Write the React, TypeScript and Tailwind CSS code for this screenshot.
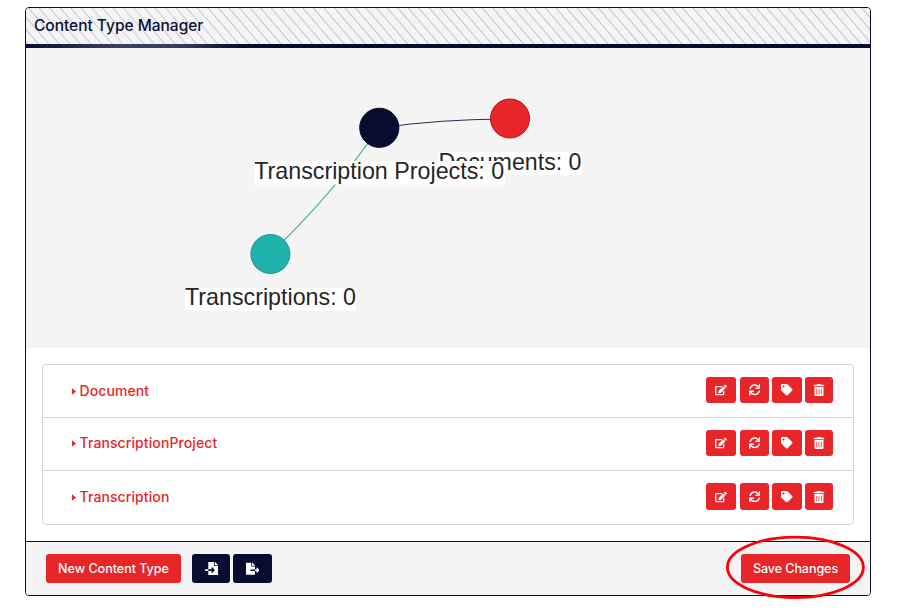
import { FaEdit, FaSync, FaTag, FaTrashAlt, FaFileImport, FaFileExport } from "react-icons/fa";

const rows = [
  { name: "Document", btn: "h-[26px]", label: "mt-[3px]" },
  { name: "TranscriptionProject", btn: "h-[26px]", label: "mt-[2px]" },
  { name: "Transcription", btn: "h-[27px]", label: "mt-[3px]" },
];

const iconBtn = "flex items-center justify-center rounded-[3px] bg-[#e8262a] text-white";

function Graph() {
  return (
    <svg width="844" height="300" viewBox="26 48 844 300" className="block bg-[#f4f4f4]" fontFamily="'Liberation Sans', Arial, sans-serif" fontSize="23.4" fill="#262626">
      <path d="M379 128Q440 119 510 119" fill="none" stroke="#2b2c52" />
      <path d="M379 128Q331 196 270 254" fill="none" stroke="#3ba9a2" strokeWidth="1.2" />
      <circle cx="510" cy="118.5" r="19.5" fill="#e8262a" stroke="#b80f18" />
      <circle cx="379.3" cy="127.8" r="19.6" fill="#080c2e" stroke="#080c2e" />
      <circle cx="270.4" cy="254" r="19.5" fill="#20b2ad" stroke="#1a918d" />
      <rect x="438" y="152" width="144" height="23" fill="#fff" />
      <text x="438.5" y="170" textLength="143" lengthAdjust="spacingAndGlyphs">Documents: 0</text>
      <rect x="254" y="161" width="251" height="23.5" fill="#fff" />
      <text x="254.2" y="179" textLength="250" lengthAdjust="spacingAndGlyphs">Transcription Projects: 0</text>
      <rect x="185" y="288" width="171" height="22.5" fill="#fff" />
      <text x="185" y="305" textLength="171" lengthAdjust="spacingAndGlyphs">Transcriptions: 0</text>
    </svg>
  );
}

export default function App() {
  return (
    <div className="relative h-[612px] w-[898px] overflow-hidden bg-white pt-[7px] pl-[25px] font-['Inter',sans-serif]">
      <div className="flex h-[589px] w-[846px] flex-col overflow-hidden rounded-[4px] border border-[#080c33] bg-white">
        <div className="relative h-9 shrink-0 bg-[#f4f4f4]">
          <svg width="844" height="36" className="absolute inset-0">
            <defs>
              <pattern id="hatch" width="10.55" height="36" patternUnits="userSpaceOnUse" patternTransform="skewX(40.6)">
                <path d="M2.5 0V36" stroke="#bdbdca" strokeWidth="1.15" />
              </pattern>
              <linearGradient id="fade">
                <stop offset="0" stopColor="#f4f4f4" stopOpacity="0" />
                <stop offset="0.12" stopColor="#f4f4f4" stopOpacity="0.3" />
                <stop offset="0.24" stopColor="#f4f4f4" stopOpacity="0" />
              </linearGradient>
            </defs>
            <rect width="844" height="36" fill="url(#hatch)" />
            <rect width="844" height="36" fill="url(#fade)" />
          </svg>
          <h1 className="relative pt-[6px] pl-2 text-[15.5px] leading-[24px] font-medium tracking-[-0.02px] whitespace-nowrap text-[#0b1038]">Content Type Manager</h1>
        </div>
        <div className="h-1 shrink-0 bg-[linear-gradient(90deg,#080c33_0,#3b3e64_90px,#3b3e64_150px,#080c33_215px)]" />
        <Graph />
        <div className="h-[193px] px-4 pt-4">
          <div className="h-[161px] rounded-[4px] border border-[#d5d5d5]">
            {rows.map((r, i) => (
              <div key={r.name} className={`flex h-[53px] items-start justify-between pt-3 pr-5 pl-[29px] ${i < 2 ? "border-b border-[#d5d5d5]" : ""}`}>
                <div className={`flex h-5 items-center text-[14px] font-medium text-[#e8262a] ${r.label}`}>
                  <svg width="4" height="7" viewBox="0 0 4 7" className="mt-[2px] mr-[3.5px]" fill="currentColor">
                    <path d="M0 .2 4 3.5 0 6.8Z" />
                  </svg>
                  <span className="tracking-[0.1px]">{r.name}</span>
                </div>
                <div className="flex">
                  <span className={`${iconBtn} ${r.btn} mr-1 w-[30px]`}><FaEdit size={12} /></span>
                  <span className={`${iconBtn} ${r.btn} mr-[3px] w-[29px]`}><FaSync size={11.5} /></span>
                  <span className={`${iconBtn} ${r.btn} mr-[3px] w-[30px]`}><FaTag size={11.5} /></span>
                  <span className={`${iconBtn} ${r.btn} w-[28px]`}><FaTrashAlt size={12} /></span>
                </div>
              </div>
            ))}
          </div>
        </div>
        <div className="flex flex-1 items-start border-t border-[#080c33] bg-[#f4f4f4] pt-3 pr-5 pl-5 text-[12.6px] font-medium text-white">
          <button className="h-[29px] w-[135px] rounded-[3px] bg-[#e8262a] pt-[2px] tracking-[-0.05px] whitespace-nowrap">New Content Type</button>
          <button className="ml-[11px] flex h-[29px] w-[38px] items-center justify-center rounded-[3px] bg-[#080c2e]"><FaFileImport size={13} /></button>
          <button className="ml-[3px] flex h-[29px] w-[39px] items-center justify-center rounded-[3px] bg-[#080c2e]"><FaFileExport size={13.5} /></button>
          <button className="ml-auto h-[29px] w-[109px] rounded-[3px] bg-[#e8262a] pt-[2px] tracking-[-0.1px] whitespace-nowrap">Save Changes</button>
        </div>
      </div>
      <svg width="142" height="66" viewBox="724 534 142 66" className="absolute top-[534px] left-[724px]">
        <ellipse cx="795.4" cy="567.3" rx="68" ry="30.2" fill="none" stroke="#fa0008" strokeWidth="2.8" />
      </svg>
    </div>
  );
}
